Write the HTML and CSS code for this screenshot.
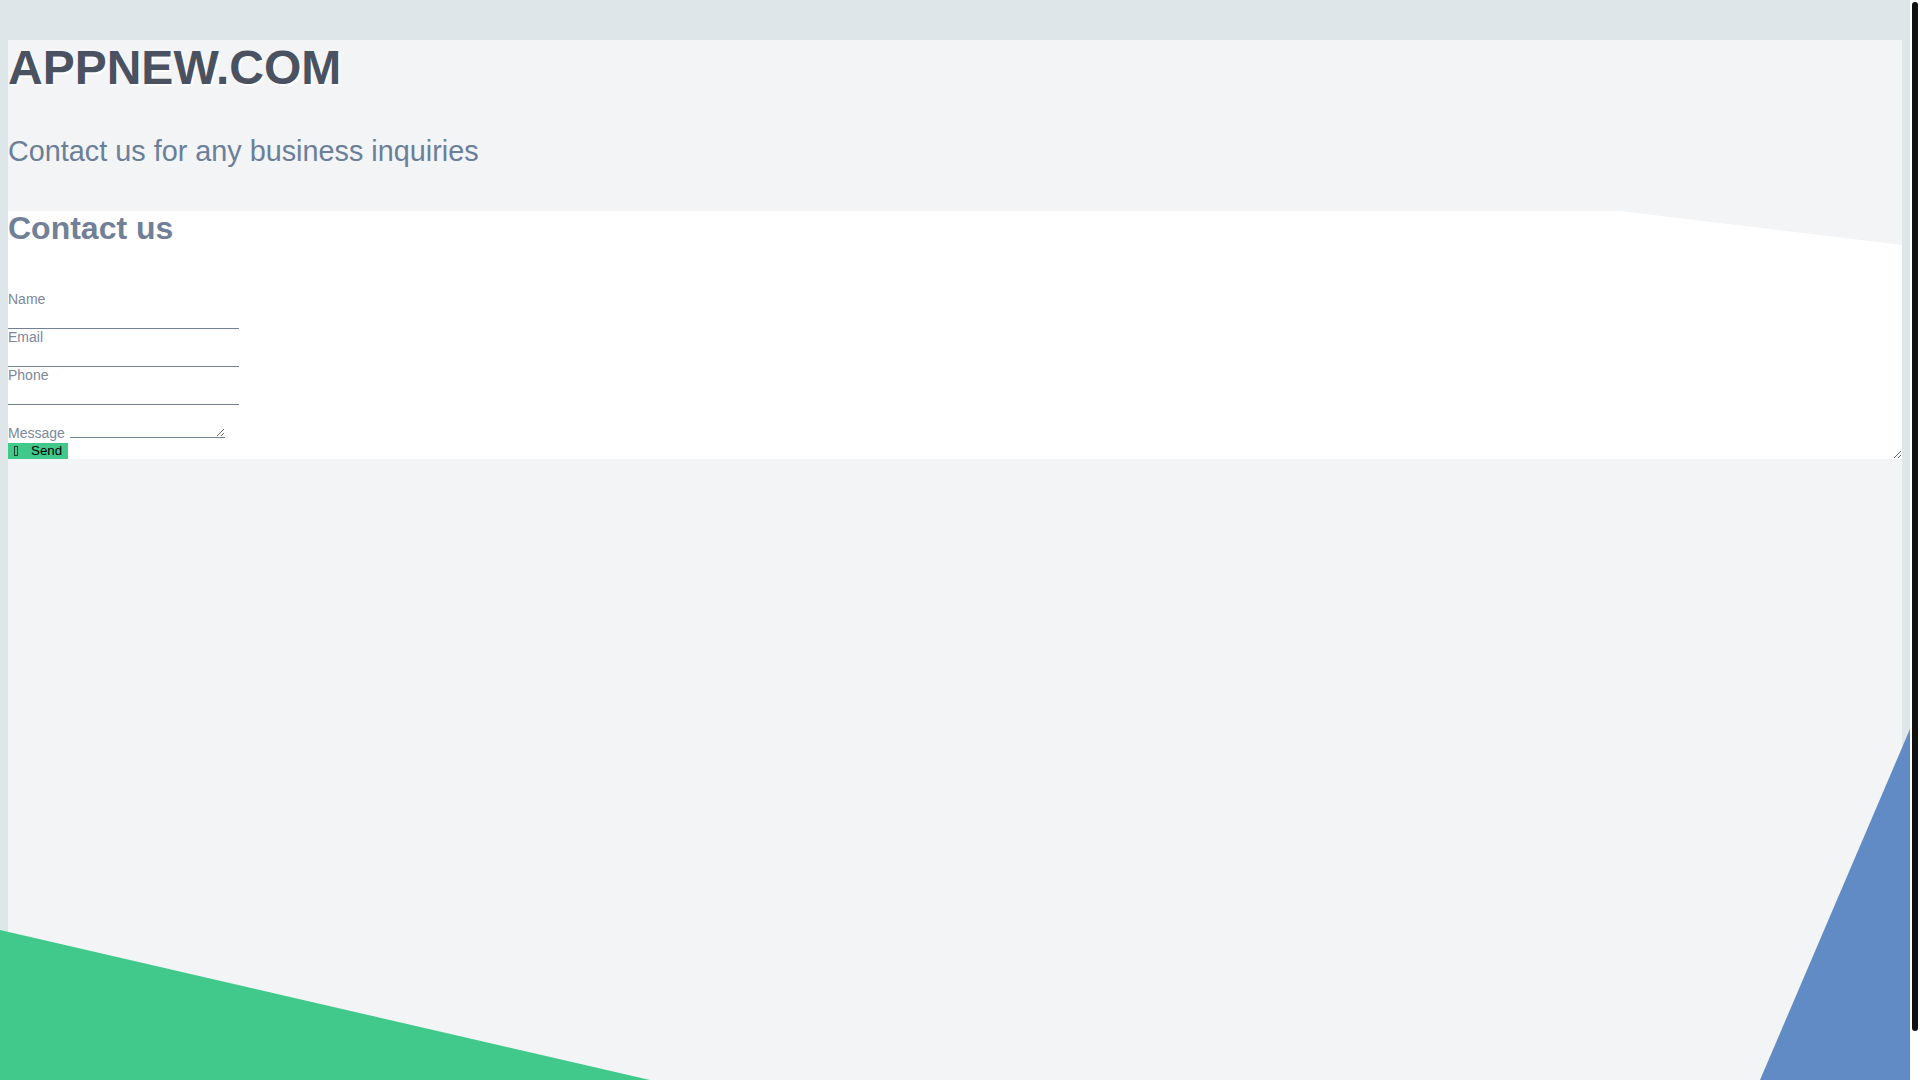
FILE: index.html
```html
<!DOCTYPE html>
<html lang="en">
<head>
<meta charset="utf-8">
<title>APPNEW.COM</title>
<link rel="stylesheet" href="styles.css">
</head>
<body>
<div class="page">
  <header class="hero">
    <h1 class="brand">APPNEW.COM</h1>
    <p class="tagline">Contact us for any business inquiries</p>
  </header>
  <section class="contact">
    <h2 class="contact-title">Contact us</h2>
    <form class="form">
      <label class="field-label">Name</label>
      <input class="field-input" type="text">
      <label class="field-label">Email</label>
      <input class="field-input" type="email">
      <label class="field-label">Phone</label>
      <input class="field-input" type="tel">
      <div class="message-row"><label class="msg-label">Message</label> <textarea class="msg-input"></textarea></div>
      <button class="send" type="button"><span class="send-icon"></span>Send</button>
    </form>
  </section>
</div>
<div class="shape-green"></div>
<div class="shape-blue"></div>
<div class="scrollbar"><div class="scrollbar-thumb"></div></div>
</body>
</html>
```
FILE: styles.css
```css
html {
  background: #dfe6e9;
}
body {
  margin: 0;
  padding: 40px 18px 8px 8px;
  background: #dfe6e9;
  font-family: "Liberation Sans", Arial, sans-serif;
}
.page {
  background: #f3f4f6;
  min-height: 100vh;
  display: flow-root;
}
.hero {
  padding-bottom: 43px;
}
.brand {
  margin: 0;
  font-size: 48px;
  font-weight: bold;
  color: #4a5261;
  text-shadow: 2px 2px 0 #ffffff;
}
.tagline {
  margin: 40px 0 0 0;
  font-size: 28.8px;
  color: #6b7f99;
}
.contact {
  background: #ffffff;
  clip-path: polygon(0 0, calc(100% - 282px) 0, 100% 34px, 100% 100%, 0 100%);
  resize: both;
  overflow: hidden;
}
.contact-title {
  margin: 0;
  font-size: 32px;
  line-height: 35px;
  font-weight: bold;
  color: #718096;
}
.form {
  margin: 45px 0 0 0;
}
.field-label {
  display: block;
  font-size: 14px;
  line-height: 16px;
  color: #7c889b;
}
.field-input {
  display: block;
  box-sizing: border-box;
  width: 231px;
  height: 22px;
  margin: 0;
  padding: 0 2px;
  border: 0;
  border-bottom: 1px solid #718096;
  background: transparent;
  outline: none;
}
.message-row {
  font-size: 14px;
  line-height: 16px;
  color: #7c889b;
  padding-bottom: 2px;
}
.msg-input {
  box-sizing: border-box;
  width: 155px;
  height: 33px;
  margin: 0 0 0 1px;
  padding: 0;
  border: 0;
  border-bottom: 1px solid #718096;
  background: transparent;
  vertical-align: baseline;
  outline: none;
}
.send {
  display: block;
  height: 16px;
  margin: 0;
  padding: 0 6px;
  border: 0;
  background: #40c98b;
  color: #000000;
  font-family: "Liberation Sans", Arial, sans-serif;
  font-size: 13.33px;
  line-height: 16px;
}
.send-icon {
  display: inline-block;
  box-sizing: border-box;
  width: 4px;
  height: 10px;
  border: 1px solid #1d3b2d;
  margin-right: 13px;
  vertical-align: -1px;
}
.shape-green {
  position: fixed;
  left: 0;
  bottom: 0;
  width: 650px;
  height: 150px;
  background: #40c98b;
  clip-path: polygon(0 0, 100% 100%, 0 100%);
}
.shape-blue {
  position: fixed;
  right: 10px;
  bottom: 0;
  width: 150px;
  height: 351px;
  background: #608bc4;
  clip-path: polygon(100% 0, 100% 100%, 0 100%);
}
.scrollbar {
  position: fixed;
  top: 0;
  right: 0;
  width: 10px;
  height: 100vh;
  background: #ffffff;
}
.scrollbar-thumb {
  width: 6px;
  height: 1029px;
  margin: 2px 0 0 2px;
  background: #111111;
  border-radius: 3px;
}
```
